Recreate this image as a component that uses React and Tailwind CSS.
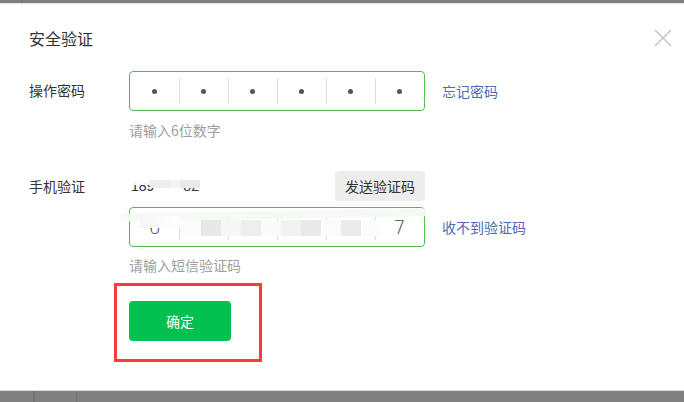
import React from 'react'

const FONT = "font-['Noto_Sans_CJK_SC','Liberation_Sans',sans-serif]"

function CloseIcon() {
  return (
    <svg width="18" height="18" viewBox="0 0 18 18" className="block">
      <path d="M1 1 L17 17 M17 1 L1 17" stroke="#c6c6c6" strokeWidth="1.6" fill="none" />
    </svg>
  )
}

function Cells({ children }) {
  return (
    <div className="relative flex w-[296px] h-[40px] border border-[#55b955] rounded-[4px] bg-white">
      {children}
    </div>
  )
}

function Cell({ first, children }) {
  return (
    <div className={`flex-1 flex items-center justify-center ${first ? '' : 'relative'}`}>
      {!first && <span className="absolute left-0 top-[6px] bottom-[6px] w-px bg-[#dedede]" />}
      {children}
    </div>
  )
}

// 马赛克块：遮挡手机号和验证码
const CODE_MOSAIC = [
  ['#fbfbfb', 51], ['#e8e8e8', 71], ['#f7f7f7', 91], ['#eeeeee', 111], ['#fafafa', 131],
  ['#f2f2f2', 151], ['#e9e9e9', 171], ['#fbfbfb', 191], ['#ebebeb', 211], ['#fcfcfc', 231],
]

export default function App() {
  return (
    <div className={`w-[684px] h-[402px] flex flex-col bg-white overflow-hidden ${FONT}`}>
      <div className="relative h-[3px] bg-[#808080]">
        <span className="absolute left-[21px] top-0 h-full w-px bg-[#6c6c6c]" />
      </div>
      <div className="h-px bg-[#e4e4e4]" />

      <div className="relative h-[386px] pl-[29px] pt-[22px]">
        <h1 className="text-[16px] leading-[24px] text-[#333]">安全验证</h1>
        <button className="absolute right-[12px] top-[25px]">
          <CloseIcon />
        </button>

        {/* 操作密码 */}
        <div className="flex mt-[21px]">
          <div className="w-[100px] h-[38px] flex items-center text-[14px] text-[#333]">操作密码</div>
          <div>
            <div className="flex items-center">
              <Cells>
                {[0, 1, 2, 3, 4, 5].map(i => (
                  <Cell key={i} first={i === 0}>
                    <span className="w-[5px] h-[5px] rounded-full bg-[#555]" />
                  </Cell>
                ))}
              </Cells>
              <a className="ml-[17px] text-[14px] text-[#4c6bb3]">忘记密码</a>
            </div>
            <p className="mt-[9px] text-[14px] leading-[20px] text-[#9e9e9e]">请输入6位数字</p>
          </div>
        </div>

        {/* 手机验证 */}
        <div className="flex mt-[31px]">
          <div className="w-[100px] h-[30px] flex items-center text-[14px] text-[#333]">手机验证</div>
          <div>
            <div className="flex items-center justify-between w-[296px] h-[30px]">
              <div className="relative h-[30px] w-[80px] flex items-center text-[14px] text-[#333] font-['Liberation_Sans',sans-serif]">
                <span className="ml-[2px]">189</span>
                <span className="ml-[29px]">82</span>
                <span className="absolute left-[-9px] top-[8px] w-[80px] h-[6px] bg-white/95" />
                <span className="absolute left-[21px] top-[9px] w-[20px] h-[8px] bg-[#ececec]" />
                <span className="absolute left-[41px] top-[9px] w-[10px] h-[8px] bg-[#f4f4f4]" />
                <span className="absolute left-[51px] top-[9px] w-[20px] h-[8px] bg-[#e9e9e9]" />
              </div>
              <button className="w-[90px] h-[30px] rounded-[4px] bg-[#ededed] text-[14px] text-[#333]">发送验证码</button>
            </div>
            <div className="flex items-center mt-[6px]">
              <Cells>
                {['6', '', '', '', '', '7'].map((d, i) => (
                  <Cell key={i} first={i === 0}>
                    <span className="text-[19px] text-[#444] font-['DejaVu_Sans',sans-serif] font-light">{d}</span>
                  </Cell>
                ))}
                <span className="absolute left-[-9px] top-[3px] w-[305px] h-[8px] bg-[#f4faf4]/90 -skew-y-1" />
                <span className="absolute left-[10px] top-[8px] w-[41px] h-[12px] bg-gradient-to-r from-[#f6f6f6] to-white/90" />
                {CODE_MOSAIC.map(([c, x]) => (
                  <span key={x} className="absolute top-[12px] w-[20px] h-[16px]" style={{ left: x, background: c }} />
                ))}
              </Cells>
              <a className="ml-[17px] text-[14px] text-[#4c6bb3]">收不到验证码</a>
            </div>
            <p className="mt-[8px] text-[14px] leading-[20px] text-[#9e9e9e]">请输入短信验证码</p>

            <div className="ml-[-15px] mt-[8px] w-[148px] h-[79px] border-[3px] border-[#fa3b3b] pt-[15px] pl-[12px]">
              <button className="w-[102px] h-[40px] rounded-[4px] bg-[#02c150] text-[14px] text-white">确定</button>
            </div>
          </div>
        </div>
      </div>

      <div className="h-px bg-[#dcdcdc]" />
      <div className="relative flex-1 bg-[#808080]">
        <span className="absolute left-[33px] top-0 h-full w-[2px] bg-[#737373]" />
        <span className="absolute left-[76px] top-0 h-full w-px bg-[#737373]" />
      </div>
    </div>
  )
}
